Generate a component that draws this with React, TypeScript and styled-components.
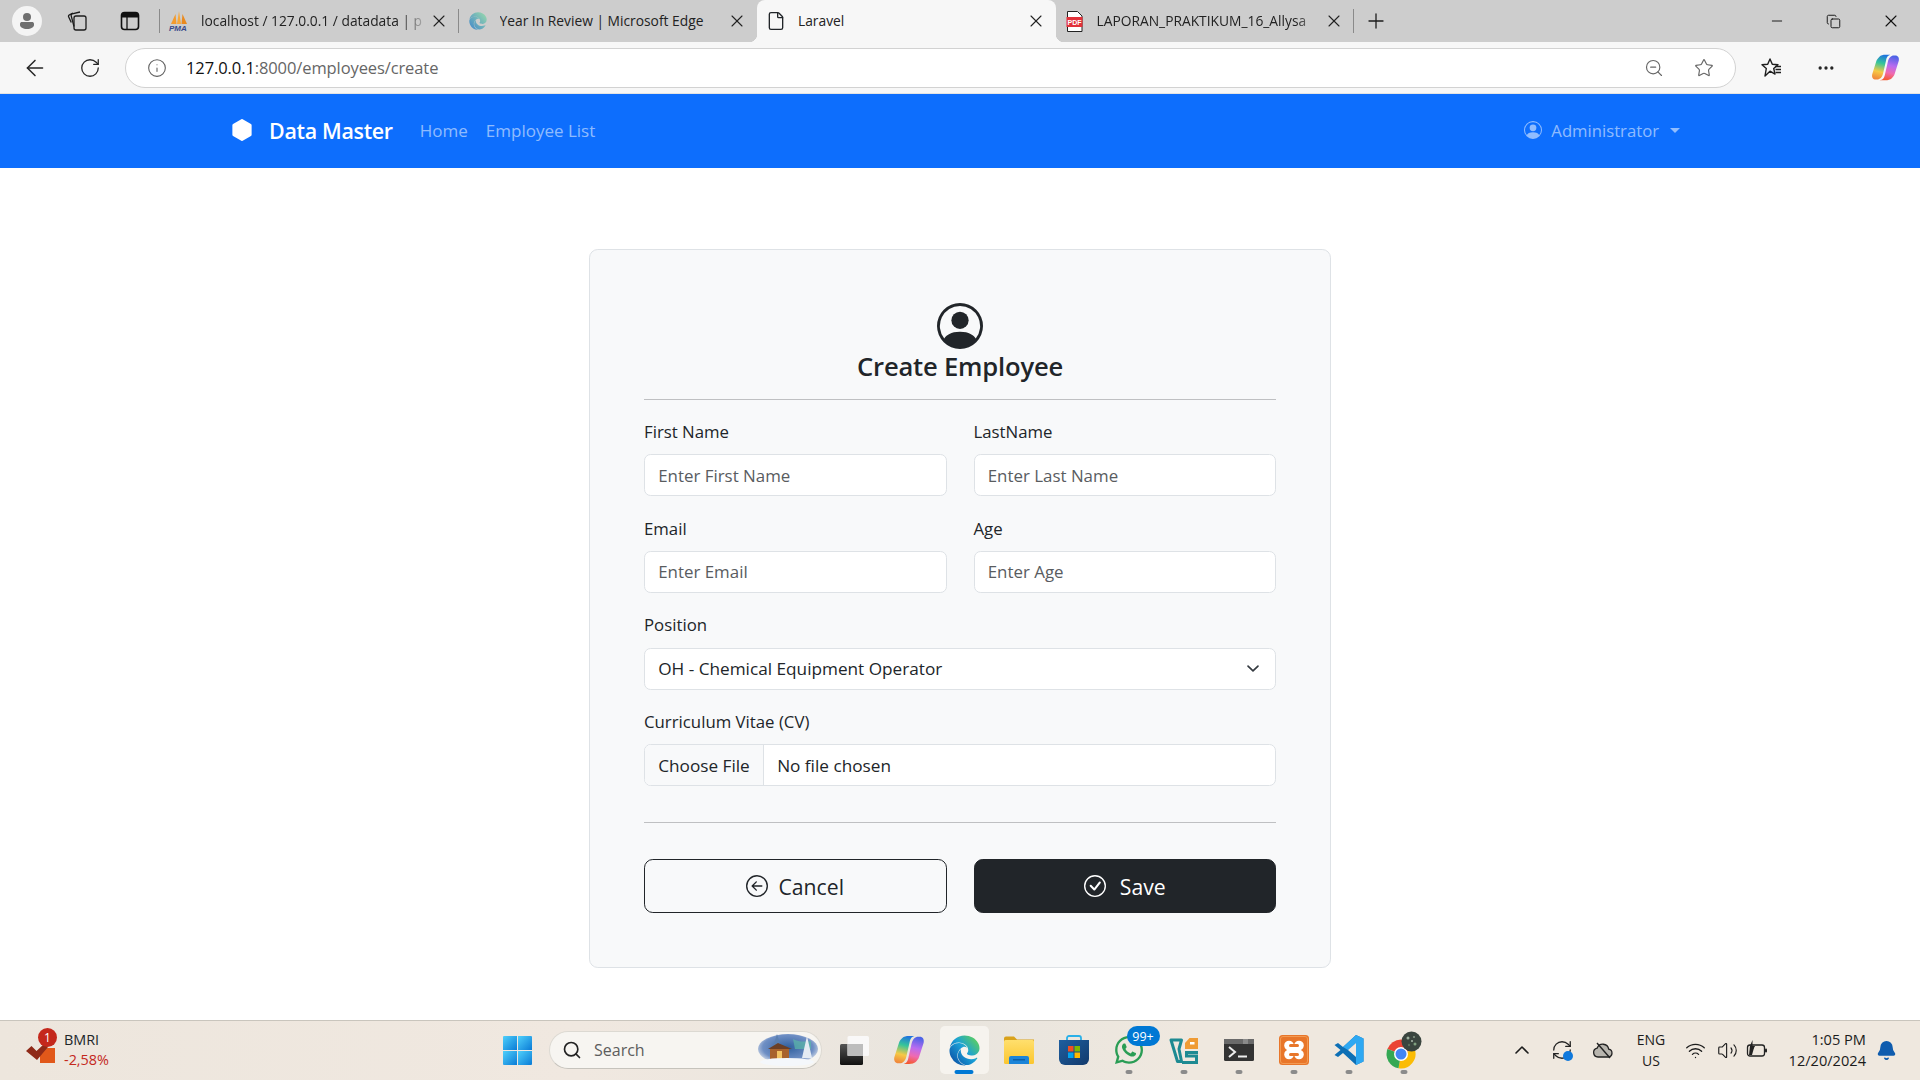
import React from "react";
import styled, { createGlobalStyle } from "styled-components";
import {
  ArrowLeft,
  Bell,
  ChevronUp,
  File as FileIcon,
  Info,
  Minus,
  MoreHorizontal,
  Plus,
  RefreshCw,
  RotateCw,
  Search,
  Star,
  Volume2,
  Wifi,
  X,
  ZoomOut,
  Copy,
} from "lucide-react";
import {
  BsArrowLeftCircle,
  BsCheckCircle,
  BsHexagonFill,
  BsPersonCircle,
} from "react-icons/bs";
import { FaEdge, FaWhatsapp } from "react-icons/fa";

const UI_FONT = `"Open Sans", "Noto Sans", "Liberation Sans", sans-serif`;
const CHEVRON = `url("data:image/svg+xml,%3csvg xmlns='http://www.w3.org/2000/svg' viewBox='0 0 16 16'%3e%3cpath fill='none' stroke='%23343a40' stroke-linecap='round' stroke-linejoin='round' stroke-width='2' d='m2 5 6 6 6-6'/%3e%3c/svg%3e")`;

const GlobalStyle = createGlobalStyle`
  html, body {
    margin: 0;
    padding: 0;
    background: #fff;
    overflow: hidden;
  }
  * {
    box-sizing: border-box;
  }
`;

const Page = styled.div`
  width: 1920px;
  height: 1080px;
  display: flex;
  flex-direction: column;
  font-family: ${UI_FONT};
  color: #212529;
`;

const SharedDefs = styled.svg`
  position: absolute;
  width: 0;
  height: 0;
`;

/* browser chrome */
const TabStrip = styled.div`
  height: 42px;
  flex: none;
  display: flex;
  align-items: stretch;
  background: #cdcdcd;
`;

const StripCell = styled.div<{ $w: number; $sep?: boolean }>`
  width: ${(p) => p.$w}px;
  flex: none;
  display: flex;
  align-items: center;
  justify-content: center;
  color: #1c1c1c;
  position: relative;
  ${(p) =>
    p.$sep &&
    `&::after {
      content: "";
      position: absolute;
      right: 0;
      top: 9px;
      bottom: 9px;
      width: 1px;
      background: #8a8a8a;
    }`}
`;

const ProfileDot = styled.div`
  width: 30px;
  height: 30px;
  border-radius: 50%;
  background: #f4f4f4;
  display: flex;
  align-items: center;
  justify-content: center;
`;

const Tab = styled.div<{ $active?: boolean; $sep?: boolean }>`
  width: 298.5px;
  flex: none;
  display: flex;
  align-items: center;
  padding: 0 9px 0 10px;
  position: relative;
  background: ${(p) => (p.$active ? "#f7f7f7" : "transparent")};
  border-radius: ${(p) => (p.$active ? "8px 8px 0 0" : "0")};
  ${(p) =>
    p.$sep &&
    `&::after {
      content: "";
      position: absolute;
      right: 0;
      top: 9px;
      bottom: 9px;
      width: 1px;
      background: #8a8a8a;
    }`}
  ${(p) =>
    p.$active &&
    `&::before, &::after {
      content: "";
      position: absolute;
      bottom: 0;
      width: 8px;
      height: 8px;
    }
    &::before {
      left: -8px;
      background: radial-gradient(circle at 0 0, transparent 8px, #f7f7f7 8.5px);
    }
    &::after {
      right: -8px;
      background: radial-gradient(circle at 100% 0, transparent 8px, #f7f7f7 8.5px);
    }`}
`;

const TabIconSlot = styled.span`
  width: 18px;
  height: 20px;
  flex: none;
  display: flex;
  align-items: center;
  justify-content: center;
  svg {
    flex: none;
  }
`;

const TabTitle = styled.span<{ $fade?: boolean }>`
  flex: 1;
  margin-left: 13px;
  min-width: 0;
  font-size: 13.8px;
  line-height: 18px;
  padding-bottom: 1px;
  white-space: nowrap;
  overflow: hidden;
  color: #222;
  ${(p) =>
    p.$fade &&
    `-webkit-mask-image: linear-gradient(90deg, #000 88%, transparent 100%);
     mask-image: linear-gradient(90deg, #000 88%, transparent 100%);`}
`;

const TabClose = styled.span`
  width: 22px;
  flex: none;
  display: flex;
  align-items: center;
  justify-content: center;
  color: #222;
`;

const WindowControls = styled.div`
  margin-left: auto;
  display: flex;
  padding-right: 1px;
`;

const Toolbar = styled.div`
  height: 52px;
  flex: none;
  display: flex;
  align-items: center;
  background: #f7f7f7;
  border-bottom: 1px solid #e3e3e3;
`;

const ToolButton = styled.div<{ $w: number; $gap?: number }>`
  width: ${(p) => p.$w}px;
  margin-left: ${(p) => p.$gap ?? 0}px;
  flex: none;
  display: flex;
  align-items: center;
  justify-content: center;
  color: #262626;
`;

const AddressBar = styled.div`
  width: 1611px;
  height: 40px;
  margin-left: 14px;
  margin-right: 9px;
  flex: none;
  display: flex;
  align-items: center;
  padding: 0 21px;
  background: #fff;
  border: 1px solid #d2d2d2;
  border-radius: 20px;
  color: #5f5f5f;
`;

const Url = styled.div`
  margin-left: 19px;
  flex: 1;
  font-size: 16.5px;
  color: #666;
  letter-spacing: -0.1px;
  b {
    font-weight: 400;
    color: #111;
  }
`;

const AddressAction = styled.span<{ $gap?: number }>`
  display: flex;
  margin-left: ${(p) => p.$gap ?? 0}px;
  color: #666;
`;

/* app navbar */
const Navbar = styled.nav`
  height: 74px;
  flex: none;
  display: flex;
  align-items: center;
  padding: 0 240px 2px 231px;
  background: #0d6efd;
`;

const Brand = styled.div`
  display: flex;
  align-items: center;
  gap: 16px;
  font-size: 21.4px;
  font-weight: 600;
  letter-spacing: -0.3px;
  color: #fff;
`;

const NavLink = styled.a<{ $gap: number }>`
  margin-left: ${(p) => p.$gap}px;
  font-size: 17px;
  color: rgba(255, 255, 255, 0.55);
  display: flex;
  align-items: center;
`;

const UserMenu = styled(NavLink)`
  margin-left: auto;
  gap: 9px;
  font-size: 16.7px;
`;

const Caret = styled.span`
  width: 0;
  height: 0;
  margin-left: 2px;
  border-top: 5px solid rgba(255, 255, 255, 0.55);
  border-left: 5px solid transparent;
  border-right: 5px solid transparent;
`;

/* form */
const Main = styled.main`
  flex: 1;
  display: flex;
  justify-content: center;
  padding-top: 81px;
  background: #fff;
`;

const Card = styled.section`
  width: 742px;
  height: 719px;
  padding: 53px 54px 0;
  background: #f8f9fa;
  border: 1px solid #dee2e6;
  border-radius: 8.8px;
`;

const CardHead = styled.header`
  display: flex;
  flex-direction: column;
  align-items: center;
`;

const Title = styled.h1`
  margin: 2px 0 0;
  font-size: 25.6px;
  line-height: 32px;
  font-weight: 600;
  letter-spacing: -0.2px;
`;

const Rule = styled.hr<{ $top: number; $bottom: number }>`
  margin: ${(p) => p.$top}px 0 ${(p) => p.$bottom}px;
  border: 0;
  border-top: 1px solid #bfc0c2;
`;

const FormRow = styled.div<{ $cols?: number }>`
  display: grid;
  grid-template-columns: ${(p) => (p.$cols === 2 ? "1fr 1fr" : "1fr")};
  column-gap: 27px;
  margin-bottom: 19.5px;
`;

const Field = styled.div`
  display: flex;
  flex-direction: column;
`;

const Label = styled.label`
  font-size: 16.8px;
  line-height: 26.4px;
  margin-bottom: 8.8px;
`;

const controlCss = `
  width: 100%;
  height: 42px;
  padding: 0 13.2px;
  font-family: ${UI_FONT};
  font-size: 16.9px;
  color: #212529;
  background-color: #fff;
  border: 1px solid #dee2e6;
  border-radius: 6.6px;
  outline: none;
`;

const TextInput = styled.input`
  ${controlCss}
  &::placeholder {
    color: #595c5f;
    opacity: 1;
  }
`;

const SelectInput = styled.select`
  ${controlCss}
  font-size: 17.2px;
  appearance: none;
  background-image: ${CHEVRON};
  background-repeat: no-repeat;
  background-position: right 13px center;
  background-size: 17.6px 13px;
`;

const FileInput = styled.input`
  ${controlCss}
  font-size: 17.2px;
  padding: 0;
  overflow: hidden;
  &::file-selector-button {
    height: 40px;
    margin: 0 13.2px 0 0;
    padding: 0 13.2px;
    font-family: ${UI_FONT};
    font-size: 17.2px;
    color: #212529;
    background: #f8f9fa;
    border: 0;
    border-right: 1px solid #dee2e6;
    border-radius: 0;
  }
`;

const ButtonRow = styled.div`
  display: grid;
  grid-template-columns: 1fr 1fr;
  column-gap: 27px;
`;

const ActionButton = styled.button<{ $dark?: boolean; $gap: number }>`
  height: 54px;
  display: flex;
  align-items: center;
  justify-content: center;
  gap: ${(p) => p.$gap}px;
  font-family: ${UI_FONT};
  font-size: 21.2px;
  color: ${(p) => (p.$dark ? "#fff" : "#212529")};
  background: ${(p) => (p.$dark ? "#212529" : "transparent")};
  border: 1px solid #212529;
  border-radius: 8.8px;
`;

/* windows taskbar */
const Taskbar = styled.footer`
  height: 60px;
  flex: none;
  display: flex;
  align-items: center;
  padding-bottom: 1px;
  background: linear-gradient(90deg, #ede6dd 0%, #f0e8e0 30%, #e9e5de 50%, #efe8df 62%, #efe8df 100%);
  border-top: 1px solid #c9c5bd;
`;

const Widget = styled.div`
  width: 490px;
  flex: none;
  display: flex;
  align-items: center;
  padding-left: 25px;
  gap: 6px;
  position: relative;
`;

const WidgetBadge = styled.span`
  position: absolute;
  left: 38px;
  top: -3px;
  width: 19px;
  height: 19px;
  border-radius: 50%;
  background: #c4281c;
  color: #fff;
  font-size: 12px;
  display: flex;
  align-items: center;
  justify-content: center;
`;

const Ticker = styled.div`
  display: flex;
  flex-direction: column;
  gap: 2px;
  font-size: 14.4px;
  line-height: 18px;
`;

const TickerDrop = styled.span`
  color: #c4281c;
`;

const StartCell = styled.div`
  width: 55px;
  flex: none;
  display: flex;
  justify-content: center;
`;

const SearchPill = styled.div`
  width: 273px;
  height: 38px;
  margin-left: 4px;
  margin-right: 4.5px;
  flex: none;
  display: flex;
  align-items: center;
  padding: 0 2px 0 12px;
  gap: 12px;
  background: #f7f5f1;
  border: 1px solid #dcd9d2;
  border-bottom-color: #c6c3bc;
  border-radius: 19px;
  font-size: 16px;
  color: #5d5d5d;
`;

const SearchArt = styled.span`
  margin-left: auto;
  display: flex;
`;

const AppCell = styled.div<{ $active?: boolean; $running?: boolean }>`
  width: 55px;
  height: 48px;
  flex: none;
  display: flex;
  align-items: center;
  justify-content: center;
  position: relative;
  &::before {
    content: "";
    position: absolute;
    inset: 0 3px;
    border-radius: 5px;
    background: ${(p) => (p.$active ? "#f6f3ee" : "transparent")};
  }
  > * {
    position: relative;
  }
  &::after {
    content: "";
    display: ${(p) => (p.$active || p.$running ? "block" : "none")};
    position: absolute;
    bottom: 0;
    left: 50%;
    transform: translateX(-50%);
    width: ${(p) => (p.$active ? 19 : 7)}px;
    height: 4px;
    border-radius: 2px;
    background: ${(p) => (p.$active ? "#0078d4" : "#8b8b8b")};
  }
`;

const CountBadge = styled.span`
  position: absolute !important;
  top: 0;
  left: 25px;
  width: 33px;
  height: 20px;
  border-radius: 10px;
  background: #0078d4;
  color: #fff;
  font-size: 12.5px;
  display: flex;
  align-items: center;
  justify-content: center;
`;

const Tray = styled.div`
  margin-left: auto;
  display: flex;
  align-items: center;
  padding-right: 14px;
`;

const TrayCell = styled.div<{ $w: number; $end?: boolean; $size?: number }>`
  width: ${(p) => p.$w}px;
  flex: none;
  display: flex;
  flex-direction: column;
  align-items: ${(p) => (p.$end ? "flex-end" : "center")};
  justify-content: center;
  font-size: ${(p) => p.$size ?? 14}px;
  line-height: 21px;
  color: #1c1c1c;
  position: relative;
`;

const SyncDot = styled.span`
  position: absolute;
  left: 21px;
  bottom: 0;
  width: 10px;
  height: 10px;
  border-radius: 50%;
  background: #0f78dc;
`;

/* small logos */
const CollectionsIcon = () => (
  <svg width="22" height="22" viewBox="0 0 22 22" fill="none" stroke="#1c1c1c" strokeWidth="1.300" strokeLinejoin="round">
    <rect x="8" y="6" width="12" height="14" rx="2" />
    <path d="M8 16.500 5.200 5.800a1.500 1.500 0 0 1 1-1.900L14 2" />
    <path d="M5.300 12.500 2.600 6.800a1.500 1.500 0 0 1 .8-2L7 3" />
  </svg>
);

const SidebarTabsIcon = () => (
  <svg width="20" height="20" viewBox="0 0 20 20">
    <rect x="1.500" y="1.500" width="17" height="17" rx="3" fill="none" stroke="#111" strokeWidth="1.600" />
    <path d="M1.500 6.500V4.500a3 3 0 0 1 3-3h11a3 3 0 0 1 3 3v2z" fill="#111" />
    <path d="M7 6v12" stroke="#111" strokeWidth="1.300" />
  </svg>
);

const PmaLogo = () => (
  <svg width="22" height="22" viewBox="0 0 22 22">
    <path d="M3 14 L7.500 4 L8.500 14 Z" fill="#f29a2e" />
    <path d="M9 14 L11 1 L13 14 Z" fill="#f7a83b" />
    <path d="M13.500 14 L14.500 4 L19 14 Z" fill="#e98a1f" />
    <text x="1" y="21" fontSize="8" fontWeight="700" fontStyle="italic" fontFamily="Liberation Sans" fill="#36498a">
      PMA
    </text>
  </svg>
);

const PdfLogo = () => (
  <svg width="17" height="21" viewBox="0 0 17 21">
    <path d="M1.500 .5h10L16 5v15.500H1.500z" fill="#fff" stroke="#222" />
    <rect x="0.500" y="6" width="16" height="10" fill="#e2313a" />
    <text x="1.600" y="13.500" fontSize="7" fontWeight="700" fontFamily="Liberation Sans" fill="#fff">
      PDF
    </text>
  </svg>
);

const CopilotLogo = ({ size }: { size: number }) => (
  <svg width={size} height={size} viewBox="0 0 24 24">
    <path
      d="M7 3c1-1 3-1.500 5-1.500h5c-3 0-4 2-4.500 4.500L10 17c-.7 3-2.500 5-5 5H4c-2.500 0-3.500-2-3-4.500L4.500 6.500C5 5 6 4 7 3z"
      fill="url(#copilotLeft)"
    />
    <path
      d="M17 21c-1 1-3 1.500-5 1.500H7c3 0 4-2 4.500-4.500L14 7c.7-3 2.500-5 5-5h1c2.500 0 3.500 2 3 4.500L19.500 17.500C19 19 18 20 17 21z"
      fill="url(#copilotRight)"
    />
  </svg>
);

const WindowsLogo = () => (
  <svg width="29" height="29" viewBox="0 0 29 29">
    <defs>
      <linearGradient id="winG" x1="0" y1="0" x2="1" y2="1">
        <stop offset="0" stopColor="#4fd0fb" />
        <stop offset="1" stopColor="#0a7bd6" />
      </linearGradient>
    </defs>
    <path d="M1 0h13v14H0V1a1 1 0 0 1 1-1z" fill="url(#winG)" />
    <path d="M15 0h13a1 1 0 0 1 1 1v13H15z" fill="url(#winG)" />
    <path d="M0 15h14v14H1a1 1 0 0 1-1-1z" fill="url(#winG)" />
    <path d="M15 15h14v13a1 1 0 0 1-1 1H15z" fill="url(#winG)" />
  </svg>
);

const VillageArt = () => (
  <svg width="62" height="32" viewBox="0 0 62 32">
    <defs>
      <radialGradient id="artSky" cx="0.5" cy="0.45" r="0.6">
        <stop offset="0" stopColor="#2f5f9e" />
        <stop offset="0.7" stopColor="#6f8fc4" />
        <stop offset="1" stopColor="#eef0f2" />
      </radialGradient>
    </defs>
    <ellipse cx="31" cy="15" rx="30" ry="15" fill="url(#artSky)" />
    <path d="M36 5c6 3 10 3 18 2v8H38z" fill="#5bb8a8" opacity=".7" />
    <path d="M20 0 L24 13 H16 Z" fill="#5a7fb0" />
    <rect x="13" y="14" width="19" height="11" fill="#a8622c" />
    <path d="M11 15 L21 9 L35 15 Z" fill="#6c3f25" />
    <rect x="20" y="17" width="5" height="8" fill="#f3c362" />
    <path d="M50 2 L55 24 H45 Z" fill="#e4ebf3" />
    <ellipse cx="30" cy="28" rx="27" ry="4" fill="#f4f7fb" />
  </svg>
);

const TaskViewLogo = () => (
  <svg width="29" height="29" viewBox="0 0 29 29">
    <defs>
      <linearGradient id="tvDark" x1="0" y1="0" x2="0" y2="1">
        <stop offset="0" stopColor="#555" />
        <stop offset="1" stopColor="#111" />
      </linearGradient>
    </defs>
    <rect x="0" y="8" width="23" height="21" rx="1.500" fill="url(#tvDark)" />
    <rect x="7.500" y="0" width="21.500" height="20" rx="1.500" fill="#fafafa" opacity=".92" />
    <rect x="7.500" y="8" width="15.500" height="12" fill="#bdbdbd" />
  </svg>
);

const FolderLogo = () => (
  <svg width="30" height="28" viewBox="0 0 30 28">
    <defs>
      <linearGradient id="folderG" x1="0" y1="0" x2="0" y2="1">
        <stop offset="0" stopColor="#ffdf6d" />
        <stop offset="1" stopColor="#fbc62f" />
      </linearGradient>
    </defs>
    <path d="M0 2.500A2 2 0 0 1 2 .5h8l3 3h17v4H0z" fill="#d9a21b" />
    <rect x="0" y="4" width="30" height="24" rx="1.500" fill="url(#folderG)" />
    <path d="M5 28v-6a2 2 0 0 1 2-2h16a2 2 0 0 1 2 2v6z" fill="#1b84d8" />
    <rect x="9" y="23" width="12" height="1.500" fill="#0d5ea6" />
  </svg>
);

const StoreLogo = () => (
  <svg width="30" height="30" viewBox="0 0 30 30">
    <defs>
      <linearGradient id="storeG" x1="0" y1="0" x2="1" y2="1">
        <stop offset="0" stopColor="#1f5fa0" />
        <stop offset="1" stopColor="#123a6c" />
      </linearGradient>
    </defs>
    <path d="M8 6V3a2 2 0 0 1 2-2h10a2 2 0 0 1 2 2v3" fill="none" stroke="#2ab0e8" strokeWidth="1.800" />
    <path d="M0 5h30v19a6 6 0 0 1-6 6H6a6 6 0 0 1-6-6z" fill="url(#storeG)" />
    <rect x="9" y="11" width="5.500" height="5.500" fill="#f25022" />
    <rect x="15.500" y="11" width="5.500" height="5.500" fill="#7fba00" />
    <rect x="9" y="17.500" width="5.500" height="5.500" fill="#00a4ef" />
    <rect x="15.500" y="17.500" width="5.500" height="5.500" fill="#ffb900" />
  </svg>
);

const VsTealLogo = () => (
  <svg width="30" height="27" viewBox="0 0 30 27">
    <path d="M2 3h10.500L10 12l2.500 12.500H8.500z" fill="none" stroke="#1d8a92" strokeWidth="3" strokeLinejoin="round" />
    <path d="M29 15.500H17.500v3.500H27.500v6.500H13" fill="none" stroke="#1d8a92" strokeWidth="3" />
    <path d="M16 12V6l4.500-5H29v11z" fill="#ef9b34" />
    <rect x="21" y="5" width="4.500" height="2.500" fill="#fff" />
  </svg>
);

const TerminalLogo = () => (
  <svg width="30" height="22" viewBox="0 0 30 22">
    <rect width="30" height="22" rx="1.500" fill="#333" />
    <rect width="30" height="5" fill="#6a6a6a" />
    <rect x="19" width="5" height="5" fill="#8a8a8a" />
    <path d="M5 8l6 5-6 5" fill="none" stroke="#eee" strokeWidth="2" />
    <rect x="14" y="16.500" width="9" height="2" fill="#eee" />
  </svg>
);

const XamppLogo = () => (
  <svg width="30" height="30" viewBox="0 0 30 30">
    <rect width="30" height="30" rx="3.500" fill="#e8762a" />
    <rect x="1.500" y="1.500" width="27" height="27" rx="2.500" fill="none" stroke="#f39a52" />
    <circle cx="10" cy="10.500" r="4.800" fill="#fff" />
    <circle cx="20" cy="10.500" r="4.800" fill="#fff" />
    <circle cx="10" cy="19.500" r="4.800" fill="#fff" />
    <circle cx="20" cy="19.500" r="4.800" fill="#fff" />
    <rect x="9" y="11" width="12" height="8" fill="#fff" />
    <rect x="10" y="9" width="10" height="3" rx="1.500" fill="#e8762a" />
    <rect x="10" y="18" width="10" height="3" rx="1.500" fill="#e8762a" />
  </svg>
);

const CodeLogo = () => (
  <svg width="30" height="30" viewBox="0 0 30 30">
    <path d="M22 0 29.500 3.500v23L22 30 9 18l-5 4-3.500-2 6-5-6-5L4 8l5 4z" fill="#0d6fb5" />
    <path d="M22 0 29.500 3.500v23L22 30V8l-8 7-5-3z" fill="#2ea8f2" />
    <path d="M22 8v14l-8-7z" fill="#f0e8e0" />
  </svg>
);

const ChromeLogo = () => (
  <svg width="36" height="38" viewBox="0 0 36 38">
    <path d="M15 23 1.400 18A14.500 14.500 0 0 1 28.600 18z" fill="#ea4335" />
    <path d="M15 23 28.600 18A14.500 14.500 0 0 1 12.500 37.300z" fill="#fbbc05" />
    <path d="M15 23 12.500 37.300A14.500 14.500 0 0 1 1.400 18z" fill="#34a853" />
    <circle cx="15" cy="23" r="7" fill="#fff" />
    <circle cx="15" cy="23" r="5.500" fill="#4285f4" />
    <circle cx="25.500" cy="10.500" r="10" fill="#3a453f" />
    <circle cx="22" cy="7" r="1.500" fill="#9db09d" />
    <circle cx="28" cy="6" r="1" fill="#889a88" />
    <circle cx="29" cy="13" r="1.500" fill="#7fa07f" />
    <circle cx="23" cy="14" r="1.200" fill="#5b6d5b" />
    <circle cx="26" cy="10" r="1" fill="#aab8aa" />
  </svg>
);

const CloudSlash = () => (
  <svg width="22" height="22" viewBox="0 0 22 22">
    <path
      d="M6 18a4.500 4.500 0 0 1-.8-8.900 6 6 0 0 1 11.500 1A4 4 0 0 1 16.500 18z"
      fill="#b8b5ae"
      stroke="#222"
      strokeWidth="1.300"
    />
    <path d="M5 4l13 15" stroke="#222" strokeWidth="1.400" />
  </svg>
);

const BatteryLow = () => (
  <svg width="22" height="22" viewBox="0 0 22 22">
    <rect x="1.500" y="6" width="17" height="11" rx="2.500" fill="none" stroke="#222" strokeWidth="1.300" />
    <path d="M4 7h4.500L6 16H3z" fill="#222" />
    <path d="M6.500 1 4 7h5L6.500 11z" fill="#222" />
    <rect x="19" y="9.500" width="2" height="4" rx="1" fill="#222" />
  </svg>
);

const FavoritesIcon = () => (
  <svg width="22" height="22" viewBox="0 0 22 22" fill="none" stroke="#1e1e1e" strokeWidth="1.400" strokeLinejoin="round">
    <path d="M9 2l2.300 5.200 5.700.5-4.300 3.800 1.300 5.600L9 14.200 4 19l1.300-7.500L1 7.700l5.700-.5z" />
    <path d="M14 9.500h6M14.500 12.500h5.500M14.500 15.500h5.500" />
  </svg>
);

const BmriMark = () => (
  <svg width="33" height="28" viewBox="0 0 33 28">
    <rect x="15" y="12" width="15" height="15" fill="#e1581a" />
    <path d="M1 15l5.500-5 5 5L19 8l4 3-11 13z" fill="#8f2a18" />
  </svg>
);

const App: React.FC = () => (
  <Page>
    <GlobalStyle />
    <SharedDefs aria-hidden="true">
      <defs>
        <linearGradient id="copilotLeft" x1="0.6" y1="0" x2="0.4" y2="1">
          <stop offset="0" stopColor="#1e72e0" />
          <stop offset="0.35" stopColor="#35c59a" />
          <stop offset="0.7" stopColor="#f6c945" />
          <stop offset="1" stopColor="#f08a3c" />
        </linearGradient>
        <linearGradient id="copilotRight" x1="0.6" y1="0" x2="0.4" y2="1">
          <stop offset="0" stopColor="#4a63e6" />
          <stop offset="0.4" stopColor="#b96cf0" />
          <stop offset="0.7" stopColor="#f06ab0" />
          <stop offset="1" stopColor="#f4592f" />
        </linearGradient>
        <linearGradient id="edgeG" x1="0.9" y1="0.2" x2="0.1" y2="0.9">
          <stop offset="0" stopColor="#54c96e" />
          <stop offset="0.45" stopColor="#1aa0d8" />
          <stop offset="1" stopColor="#0c55a8" />
        </linearGradient>
        <linearGradient id="edgeFaded" x1="0.9" y1="0.2" x2="0.1" y2="0.9">
          <stop offset="0" stopColor="#8fd0b0" />
          <stop offset="1" stopColor="#4a8fc8" />
        </linearGradient>
      </defs>
    </SharedDefs>
    <TabStrip>
      <StripCell $w={54}>
        <ProfileDot>
          <svg width="20" height="20" viewBox="0 0 20 20">
            <circle cx="10" cy="6" r="4" fill="#6f6f6f" />
            <path d="M3 13c0-1.500 1-2 2-2h10c1 0 2 .5 2 2v1c0 2-3 4-7 4s-7-2-7-4z" fill="#6f6f6f" />
          </svg>
        </ProfileDot>
      </StripCell>
      <StripCell $w={46}>
        <CollectionsIcon />
      </StripCell>
      <StripCell $w={60} $sep>
        <SidebarTabsIcon />
      </StripCell>
      <Tab $sep>
        <TabIconSlot>
          <PmaLogo />
        </TabIconSlot>
        <TabTitle $fade>localhost / 127.0.0.1 / datadata | p</TabTitle>
        <TabClose>
          <X size={20} strokeWidth={1.3} />
        </TabClose>
      </Tab>
      <Tab>
        <TabIconSlot>
          <FaEdge size={18} fill="url(#edgeFaded)" />
        </TabIconSlot>
        <TabTitle>Year In Review | Microsoft Edge</TabTitle>
        <TabClose>
          <X size={20} strokeWidth={1.3} />
        </TabClose>
      </Tab>
      <Tab $active>
        <TabIconSlot>
          <FileIcon size={20} strokeWidth={1.6} />
        </TabIconSlot>
        <TabTitle>Laravel</TabTitle>
        <TabClose>
          <X size={20} strokeWidth={1.3} />
        </TabClose>
      </Tab>
      <Tab $sep>
        <TabIconSlot>
          <PdfLogo />
        </TabIconSlot>
        <TabTitle $fade>LAPORAN_PRAKTIKUM_16_Allysa</TabTitle>
        <TabClose>
          <X size={20} strokeWidth={1.3} />
        </TabClose>
      </Tab>
      <StripCell $w={44}>
        <Plus size={24} strokeWidth={1.3} />
      </StripCell>
      <WindowControls>
        <StripCell $w={57}>
          <Minus size={16} strokeWidth={1.4} color="#111" />
        </StripCell>
        <StripCell $w={57}>
          <Copy size={15} strokeWidth={1.5} color="#111" />
        </StripCell>
        <StripCell $w={57}>
          <X size={20} strokeWidth={1.3} color="#111" />
        </StripCell>
      </WindowControls>
    </TabStrip>

    <Toolbar>
      <ToolButton $w={69}>
        <ArrowLeft size={26} strokeWidth={1.4} />
      </ToolButton>
      <ToolButton $w={42}>
        <RotateCw size={22} strokeWidth={1.4} />
      </ToolButton>
      <AddressBar>
        <Info size={20} strokeWidth={1.3} />
        <Url>
          <b>127.0.0.1</b>:8000/employees/create
        </Url>
        <AddressAction>
          <ZoomOut size={20} strokeWidth={1.4} />
        </AddressAction>
        <AddressAction $gap={30}>
          <Star size={20} strokeWidth={1.4} />
        </AddressAction>
      </AddressBar>
      <ToolButton $w={54}>
        <FavoritesIcon />
      </ToolButton>
      <ToolButton $w={54}>
        <MoreHorizontal size={20} strokeWidth={2} />
      </ToolButton>
      <ToolButton $w={54} $gap={5}>
        <CopilotLogo size={29} />
      </ToolButton>
    </Toolbar>

    <Navbar>
      <Brand>
        <BsHexagonFill size={22} />
        Data Master
      </Brand>
      <NavLink $gap={27}>Home</NavLink>
      <NavLink $gap={18}>Employee List</NavLink>
      <UserMenu $gap={0}>
        <BsPersonCircle size={18} />
        Administrator
        <Caret />
      </UserMenu>
    </Navbar>

    <Main>
      <Card>
        <CardHead>
          <BsPersonCircle size={46} />
          <Title>Create Employee</Title>
        </CardHead>
        <Rule $top={16} $bottom={19} />
        <FormRow $cols={2}>
          <Field>
            <Label>First Name</Label>
            <TextInput placeholder="Enter First Name" />
          </Field>
          <Field>
            <Label>LastName</Label>
            <TextInput placeholder="Enter Last Name" />
          </Field>
        </FormRow>
        <FormRow $cols={2}>
          <Field>
            <Label>Email</Label>
            <TextInput placeholder="Enter Email" />
          </Field>
          <Field>
            <Label>Age</Label>
            <TextInput placeholder="Enter Age" />
          </Field>
        </FormRow>
        <FormRow>
          <Field>
            <Label>Position</Label>
            <SelectInput defaultValue="oh">
              <option value="oh">OH - Chemical Equipment Operator</option>
            </SelectInput>
          </Field>
        </FormRow>
        <Field>
          <Label>Curriculum Vitae (CV)</Label>
          <FileInput type="file" />
        </Field>
        <Rule $top={36} $bottom={36} />
        <ButtonRow>
          <ActionButton $gap={10}>
            <BsArrowLeftCircle size={22} />
            Cancel
          </ActionButton>
          <ActionButton $dark $gap={14}>
            <BsCheckCircle size={22} />
            Save
          </ActionButton>
        </ButtonRow>
      </Card>
    </Main>

    <Taskbar>
      <Widget>
        <BmriMark />
        <WidgetBadge>1</WidgetBadge>
        <Ticker>
          <span>BMRI</span>
          <TickerDrop>-2,58%</TickerDrop>
        </Ticker>
      </Widget>
      <StartCell>
        <WindowsLogo />
      </StartCell>
      <SearchPill>
        <Search size={20} strokeWidth={2} color="#222" />
        Search
        <SearchArt>
          <VillageArt />
        </SearchArt>
      </SearchPill>
      <AppCell>
        <TaskViewLogo />
      </AppCell>
      <AppCell>
        <CopilotLogo size={32} />
      </AppCell>
      <AppCell $active>
        <FaEdge size={31} fill="url(#edgeG)" />
      </AppCell>
      <AppCell>
        <FolderLogo />
      </AppCell>
      <AppCell>
        <StoreLogo />
      </AppCell>
      <AppCell $running>
        <FaWhatsapp size={32} color="#2a9d55" />
        <CountBadge>99+</CountBadge>
      </AppCell>
      <AppCell $running>
        <VsTealLogo />
      </AppCell>
      <AppCell $running>
        <TerminalLogo />
      </AppCell>
      <AppCell $running>
        <XamppLogo />
      </AppCell>
      <AppCell $running>
        <CodeLogo />
      </AppCell>
      <AppCell $running>
        <ChromeLogo />
      </AppCell>
      <Tray>
        <TrayCell $w={40}>
          <ChevronUp size={24} strokeWidth={1.6} />
        </TrayCell>
        <TrayCell $w={40}>
          <RefreshCw size={22} strokeWidth={1.4} color="#222" />
          <SyncDot />
        </TrayCell>
        <TrayCell $w={41}>
          <CloudSlash />
        </TrayCell>
        <TrayCell $w={56}>
          <span>ENG</span>
          <span>US</span>
        </TrayCell>
        <TrayCell $w={33}>
          <Wifi size={21} strokeWidth={1.5} />
        </TrayCell>
        <TrayCell $w={30}>
          <Volume2 size={21} strokeWidth={1.3} />
        </TrayCell>
        <TrayCell $w={30}>
          <BatteryLow />
        </TrayCell>
        <TrayCell $w={94} $end $size={14.6}>
          <span>1:05 PM</span>
          <span>12/20/2024</span>
        </TrayCell>
        <TrayCell $w={40}>
          <Bell size={21} fill="#0f5cae" color="#0f5cae" />
        </TrayCell>
      </Tray>
    </Taskbar>
  </Page>
);

export default App;
